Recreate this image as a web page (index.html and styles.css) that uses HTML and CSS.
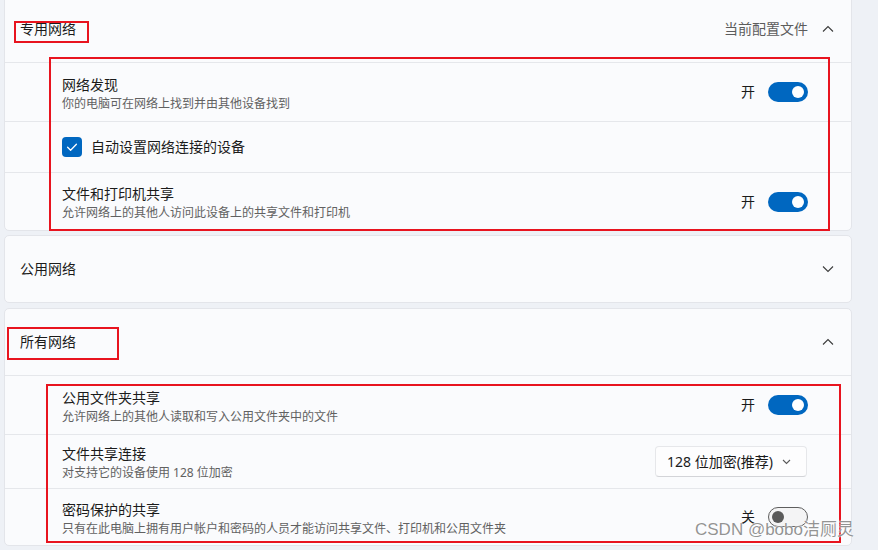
FILE: index.html
```html
<!DOCTYPE html>
<html lang="zh-CN">
<head>
<meta charset="utf-8">
<title>网络设置</title>
<link rel="stylesheet" href="styles.css">
</head>
<body>
<div class="page">
  <section class="card card-first">
    <div class="card-head">
      <span class="head-title">专用网络</span>
      <span class="head-right">
        <span class="head-aside">当前配置文件</span>
        <svg class="chev" width="16" height="16" viewBox="0 0 16 16"><path d="M3 10.5 L8 5.5 L13 10.5" /></svg>
      </span>
    </div>
    <div class="row h58">
      <div class="row-text">
        <div class="row-title">网络发现</div>
        <div class="row-sub">你的电脑可在网络上找到并由其他设备找到</div>
      </div>
      <div class="row-ctrl"><span class="state">开</span><span class="toggle on"><span class="knob"></span></span></div>
    </div>
    <div class="row h50">
      <div class="check-wrap">
        <span class="checkbox"><svg width="20" height="20" viewBox="0 0 20 20"><path d="M5.6 10.2 L8.6 13.2 L14.4 7.2" /></svg></span>
        <span class="row-title">自动设置网络连接的设备</span>
      </div>
    </div>
    <div class="row h57">
      <div class="row-text">
        <div class="row-title">文件和打印机共享</div>
        <div class="row-sub">允许网络上的其他人访问此设备上的共享文件和打印机</div>
      </div>
      <div class="row-ctrl"><span class="state">开</span><span class="toggle on"><span class="knob"></span></span></div>
    </div>
  </section>

  <section class="card">
    <div class="card-head">
      <span class="head-title">公用网络</span>
      <svg class="chev" width="16" height="16" viewBox="0 0 16 16"><path d="M3 5.5 L8 10.5 L13 5.5" /></svg>
    </div>
  </section>

  <section class="card card-gap">
    <div class="card-head">
      <span class="head-title">所有网络</span>
      <svg class="chev" width="16" height="16" viewBox="0 0 16 16"><path d="M3 10.5 L8 5.5 L13 10.5" /></svg>
    </div>
    <div class="row h58">
      <div class="row-text">
        <div class="row-title">公用文件夹共享</div>
        <div class="row-sub">允许网络上的其他人读取和写入公用文件夹中的文件</div>
      </div>
      <div class="row-ctrl"><span class="state">开</span><span class="toggle on"><span class="knob"></span></span></div>
    </div>
    <div class="row h53">
      <div class="row-text">
        <div class="row-title">文件共享连接</div>
        <div class="row-sub">对支持它的设备使用 128 位加密</div>
      </div>
      <div class="select">
        <span>128 位加密(推荐)</span>
        <svg width="9" height="6" viewBox="0 0 9 6"><path d="M1 1 L4.5 4.5 L8 1" /></svg>
      </div>
    </div>
    <div class="row h56">
      <div class="row-text">
        <div class="row-title">密码保护的共享</div>
        <div class="row-sub">只有在此电脑上拥有用户帐户和密码的人员才能访问共享文件、打印机和公用文件夹</div>
      </div>
      <div class="row-ctrl"><span class="state">关</span><span class="toggle off"><span class="knob"></span></span></div>
    </div>
  </section>
</div>

<div class="mark mark-a"></div>
<div class="mark mark-b"></div>
<div class="mark mark-c"></div>
<div class="mark mark-d"></div>
<div class="watermark">CSDN @bobo洁厕灵</div>
</body>
</html>
```
FILE: styles.css
```css
* { box-sizing: border-box; }
html, body { margin: 0; padding: 0; }
body {
  width: 878px;
  height: 550px;
  overflow: hidden;
  position: relative;
  background: #eef1f6;
  font-family: "Noto Sans", "Noto Sans CJK SC", sans-serif;
  color: #1b1b1b;
}
.page {
  margin-left: 4px;
  width: 848px;
  display: flex;
  flex-direction: column;
  gap: 4px;
}
.card {
  background: #fafbfd;
  border: 1px solid #e3e5ea;
  border-radius: 5px;
}
.card-first { margin-top: -5px; }
.card-gap { margin-top: 1px; }
.card-head {
  height: 66px;
  display: flex;
  align-items: center;
  justify-content: space-between;
  padding: 0 15px 0 15px;
}
.head-title { font-size: 14px; line-height: 20px; }
.head-right { display: flex; align-items: center; gap: 12px; }
.head-aside { font-size: 14px; line-height: 20px; color: #5c5c5c; }
.chev path { fill: none; stroke: #3b3b3b; stroke-width: 1.1; }
.row {
  border-top: 1px solid #e5e7eb;
  display: flex;
  align-items: center;
  justify-content: space-between;
  padding: 0 43px 0 57px;
}
.h58 { height: 59px; }
.h57 { height: 58px; }
.h56 { height: 57px; }
.h53 { height: 54px; }
.h50 { height: 51px; }
.row-text { padding-top: 2px; }
.row-title { font-size: 14px; line-height: 20px; color: #1b1b1b; }
.row-sub { font-size: 12px; line-height: 17px; color: #616161; }
.row-ctrl { display: flex; align-items: center; }
.state { font-size: 14px; line-height: 20px; margin-right: 13px; }
.toggle {
  width: 40px;
  height: 20px;
  border-radius: 10px;
  display: flex;
  align-items: center;
  padding: 0 3px;
}
.toggle.on { background: #0067c0; justify-content: flex-end; }
.toggle.off { background: #f4f4f5; border: 1px solid #5e5e5e; justify-content: flex-start; }
.knob { width: 12px; height: 12px; border-radius: 50%; }
.toggle.on .knob { background: #ffffff; margin-right: 1px; }
.toggle.off .knob { background: #5a5a5a; }
.check-wrap { display: flex; align-items: center; gap: 9px; }
.checkbox {
  width: 20px;
  height: 20px;
  border-radius: 4px;
  background: #0067c0;
  display: flex;
}
.checkbox path { fill: none; stroke: #ffffff; stroke-width: 1.3; stroke-linecap: round; stroke-linejoin: round; }
.select {
  width: 152px;
  height: 31px;
  margin-right: 1px;
  background: #fdfdfe;
  border: 1px solid #e6e7ea;
  border-bottom-color: #d3d4d8;
  border-radius: 4px;
  display: flex;
  align-items: center;
  justify-content: space-between;
  padding: 0 15px 0 11px;
  font-size: 14px;
  line-height: 20px;
  color: #1b1b1b;
}
.select path { fill: none; stroke: #5a5a5a; stroke-width: 1.1; }
.mark {
  position: absolute;
  border: 2px solid #e8141f;
}
.mark-a { left: 14px; top: 21px; width: 75px; height: 22px; }
.mark-b { left: 49px; top: 57px; width: 781px; height: 174px; }
.mark-c { left: 7px; top: 327px; width: 112px; height: 33px; }
.mark-d { left: 46px; top: 384px; width: 795px; height: 159px; }
.watermark {
  position: absolute;
  left: 695px;
  top: 521px;
  font-family: "Liberation Sans", "Noto Sans CJK SC", sans-serif;
  font-size: 17px;
  line-height: 17px;
  color: rgba(128, 128, 128, 0.85);
  text-shadow: 0 0 1px #ffffff, 0 0 2px #ffffff;
  white-space: nowrap;
}
```
